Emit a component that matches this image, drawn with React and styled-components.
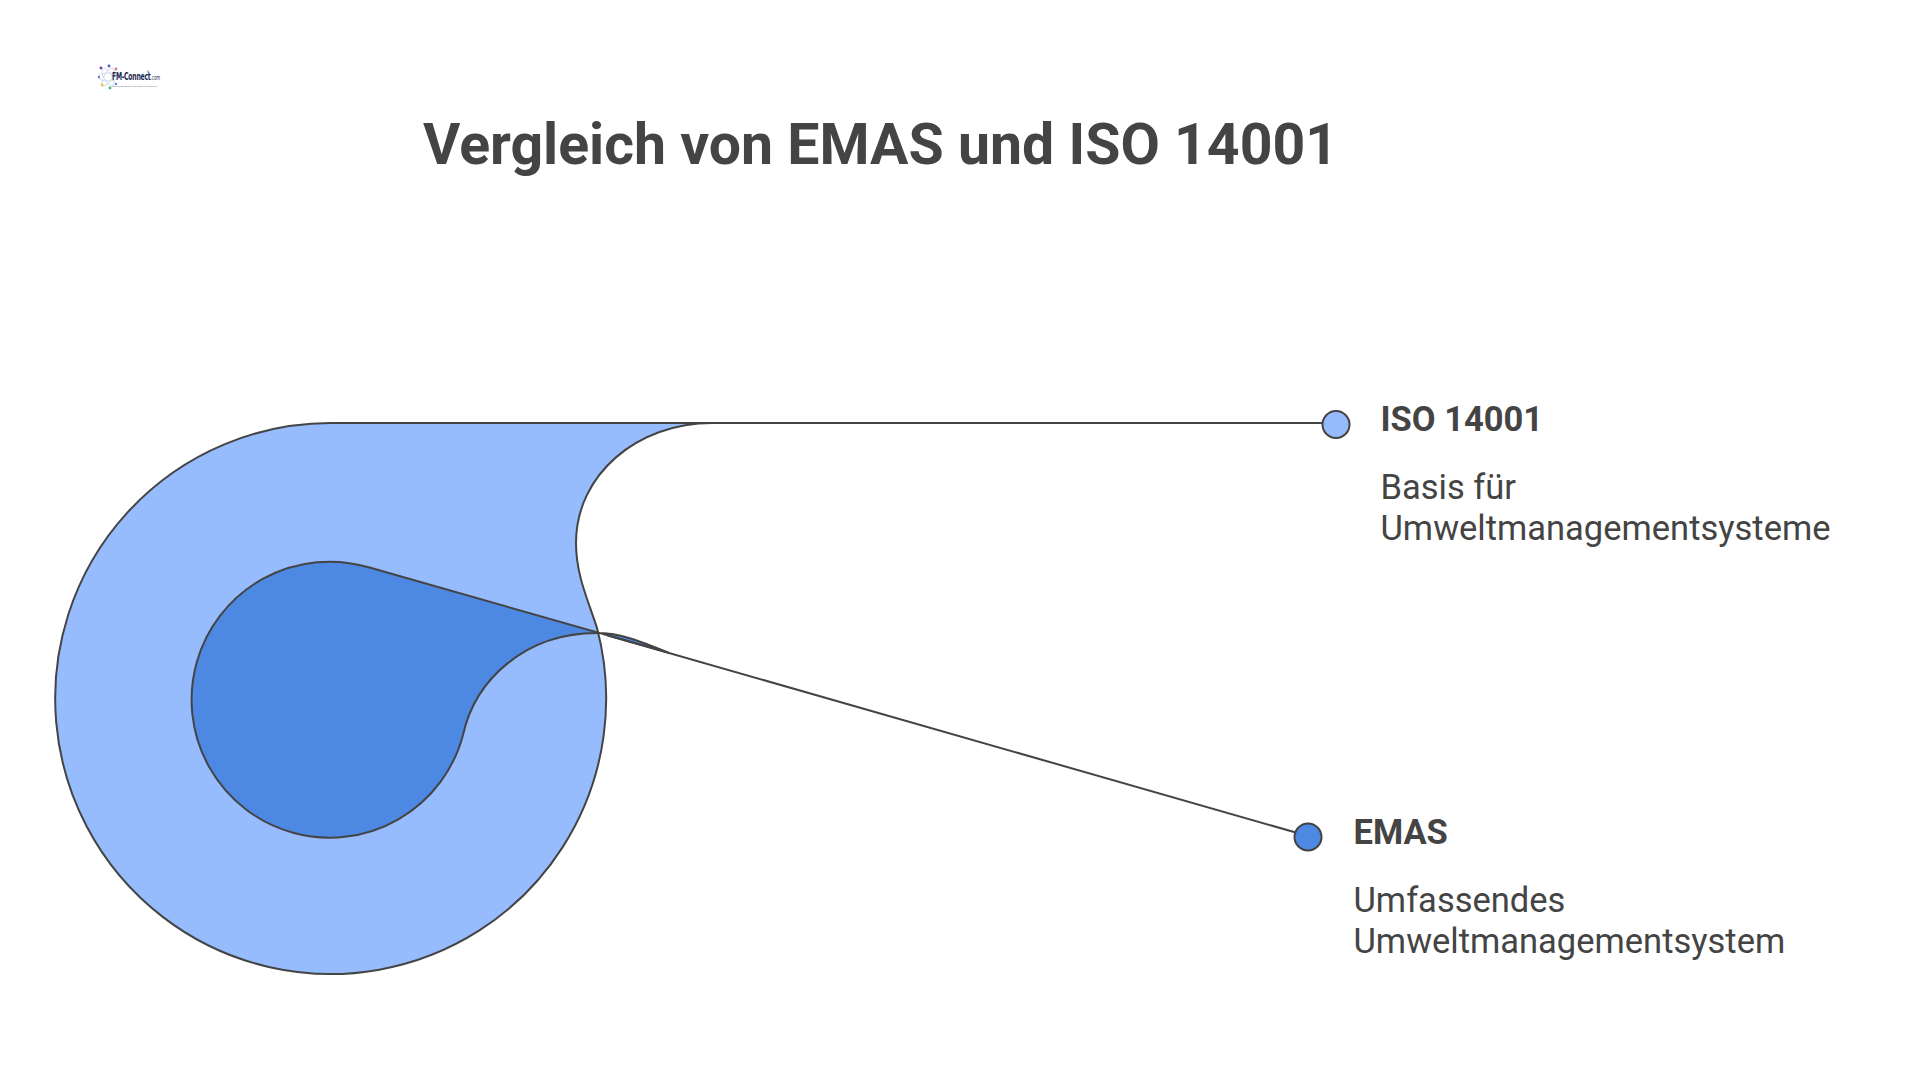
import React from "react";
import styled, { createGlobalStyle } from "styled-components";

const GlobalStyle = createGlobalStyle`
  html, body {
    margin: 0;
    padding: 0;
    background: #ffffff;
  }
  body {
    font-family: Roboto, "Liberation Sans", sans-serif;
    color: #444444;
  }
`;

const Page = styled.div`
  width: 1920px;
  height: 1085px;
  background: #ffffff;
  overflow: hidden;
`;

const Header = styled.div`
  padding: 64px 0 0 97px;
  height: 21px;
`;

const Logo = styled.div`
  display: flex;
  align-items: center;
  height: 26px;
`;

const LogoText = styled.div`
  display: flex;
  flex-direction: column;
  margin-left: -7px;
  margin-top: 4px;
`;

const LogoName = styled.div`
  position: relative;
  font-family: "DejaVu Sans Condensed", "DejaVu Sans", sans-serif;
  font-weight: bold;
  font-size: 11px;
  line-height: 11px;
  color: #1d2b52;
  letter-spacing: -0.4px;
  transform: scaleX(0.62);
  transform-origin: left center;
  white-space: nowrap;
`;

const LogoDomain = styled.span`
  font-size: 7px;
  font-weight: normal;
  letter-spacing: 0;
`;

const LogoTm = styled.span`
  position: absolute;
  left: 56px;
  top: -4px;
  font-size: 3px;
  font-weight: normal;
`;

const LogoTagline = styled.div`
  font-family: "Liberation Sans", sans-serif;
  font-size: 2.3px;
  line-height: 4px;
  color: #5a6a88;
  white-space: nowrap;
`;

const Title = styled.h1`
  margin: 26px 0 0 423px;
  font-family: Roboto, "Liberation Sans", sans-serif;
  font-weight: 700;
  font-size: 57.2px;
  line-height: 68px;
  color: #444444;
  white-space: nowrap;
`;

const Main = styled.div`
  display: flex;
  align-items: flex-start;
  margin-top: 201px;
`;

const Chart = styled.svg`
  display: block;
  flex: none;
`;

const Callouts = styled.div`
  display: flex;
  flex-direction: column;
  gap: 263px;
  padding-top: 19px;
`;

const Callout = styled.div`
  padding-left: ${(p) => p.$indent}px;
`;

const CalloutTitle = styled.div`
  font-family: Roboto, "Liberation Sans", sans-serif;
  font-weight: 700;
  font-size: 34.5px;
  line-height: 41px;
  color: #444444;
`;

const CalloutText = styled.div`
  margin-top: 27px;
  font-family: Roboto, "Liberation Sans", sans-serif;
  font-weight: 400;
  font-size: 34.5px;
  line-height: 41px;
  color: #444444;
  white-space: nowrap;
`;

const LIGHT = "#96bcfe";
const DARK = "#4d88e3";
const INK = "#444444";

const callouts = [
  { title: "ISO 14001", lines: ["Basis für", "Umweltmanagementsysteme"], indent: 27 },
  { title: "EMAS", lines: ["Umfassendes", "Umweltmanagementsystem"], indent: 0 },
];

function LogoMark() {
  return (
    <svg width="22" height="28" viewBox="0 0 22 28">
      <g fill="none" stroke="#c9d3e6" strokeWidth="0.8">
        <ellipse cx="11" cy="14" rx="10" ry="4" transform="rotate(60 11 14)" />
        <ellipse cx="11" cy="14" rx="10" ry="4" transform="rotate(-60 11 14)" />
        <ellipse cx="11" cy="14" rx="10" ry="4" />
      </g>
      <circle cx="4" cy="5" r="1.4" fill="#7a3f9e" />
      <circle cx="12" cy="3" r="1.4" fill="#3e5fcf" />
      <circle cx="19" cy="6" r="1.4" fill="#e07a8a" />
      <circle cx="2" cy="14" r="1.2" fill="#8a6fc4" />
      <circle cx="5" cy="22" r="1.4" fill="#e9c73a" />
      <circle cx="13" cy="25" r="1.4" fill="#4fb06a" />
      <circle cx="19" cy="21" r="1.2" fill="#5a8ad8" />
    </svg>
  );
}

function Diagram() {
  return (
    <Chart width="1353.5" height="620" viewBox="0 380 1353.5 620">
      <path
        d="M 597 628 A 275.5 275.5 0 1 1 330.5 423 L 712 423 C 638 423 576 474 576 543 C 576 575 588 600 597 628 Z"
        fill={LIGHT}
        stroke={INK}
        strokeWidth="2"
        strokeLinejoin="round"
      />
      <line x1="600" y1="423" x2="1336" y2="423" stroke={INK} strokeWidth="2" />
      <path
        d="M 368.7 567.3 L 668 652.5 C 640 641 620 633 597 633 C 525 633 475 680 463 735 A 138 138 0 1 1 368.7 567.3 Z"
        fill={DARK}
        stroke={INK}
        strokeWidth="2"
        strokeLinejoin="round"
      />
      <line x1="608" y1="635.5" x2="1308" y2="836" stroke={INK} strokeWidth="2" />
      <circle cx="1336" cy="424.5" r="13.5" fill={LIGHT} stroke={INK} strokeWidth="2" />
      <circle cx="1308" cy="837" r="13.5" fill={DARK} stroke={INK} strokeWidth="2" />
    </Chart>
  );
}

export default function App() {
  return (
    <Page>
      <GlobalStyle />
      <Header>
        <Logo>
          <LogoMark />
          <LogoText>
            <LogoName>
              FM-Connect<LogoDomain>.com</LogoDomain>
              <LogoTm>TM</LogoTm>
            </LogoName>
            <LogoTagline>Das FM-Beratungs- und Ingenieur-Netzwerk</LogoTagline>
          </LogoText>
        </Logo>
      </Header>
      <Title>Vergleich von EMAS und ISO 14001</Title>
      <Main>
        <Diagram />
        <Callouts>
          {callouts.map((c) => (
            <Callout key={c.title} $indent={c.indent}>
              <CalloutTitle>{c.title}</CalloutTitle>
              <CalloutText>
                {c.lines.map((l) => (
                  <div key={l}>{l}</div>
                ))}
              </CalloutText>
            </Callout>
          ))}
        </Callouts>
      </Main>
    </Page>
  );
}
